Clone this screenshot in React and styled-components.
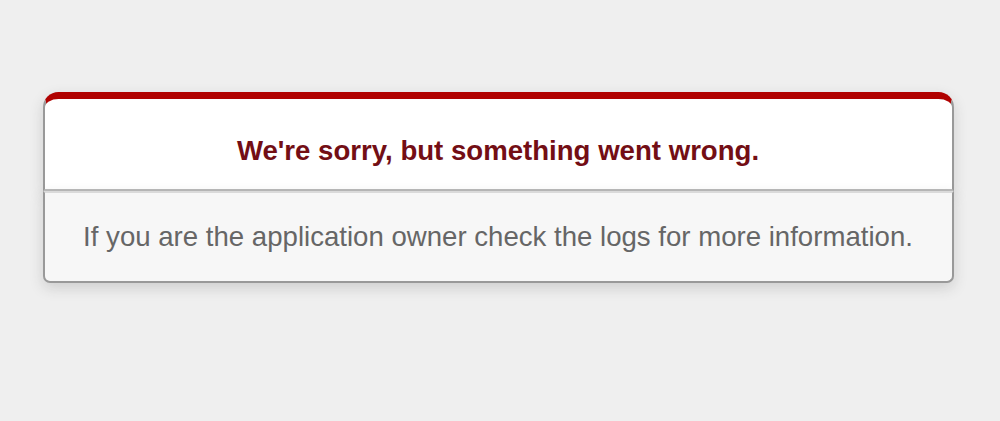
import React from "react";
import styled, { createGlobalStyle } from "styled-components";

const GlobalStyle = createGlobalStyle`
  html, body {
    margin: 0;
    padding: 0;
    background-color: #efefef;
  }
  body {
    color: #2e2f30;
    text-align: center;
    font-family: "Liberation Sans", Arial, sans-serif;
  }
`;

const Page = styled.main`
  min-height: 421px;
  padding-top: 92px;
  box-sizing: border-box;
`;

const Dialog = styled.div`
  width: 911px;
  margin: 0 auto;
  transform: translateX(-2px);
`;

const Header = styled.div`
  border: 2px solid #ccc;
  border-right-color: #999;
  border-left-color: #999;
  border-bottom-color: #bbb;
  border-top: 7.5px solid #b00100;
  border-top-left-radius: 15.5px;
  border-top-right-radius: 15.5px;
  background-color: #fff;
  padding: 12px 12% 0;
  box-shadow: 0 5px 14px rgba(50, 50, 50, 0.17);
`;

const Title = styled.h1`
  font-size: 27.6px;
  color: #730e15;
  line-height: 41.4px;
  margin: 18.5px 0 18.5px;
  font-weight: bold;
`;

const Message = styled.p`
  margin: 0 0 27.6px;
  padding: 27.6px;
  font-size: 27.6px;
  background-color: #f7f7f7;
  border: 2px solid #ccc;
  border-right-color: #999;
  border-left-color: #999;
  border-bottom-color: #999;
  border-top-color: #dadada;
  border-bottom-left-radius: 7px;
  border-bottom-right-radius: 7px;
  color: #666;
  box-shadow: 0 5px 14px rgba(50, 50, 50, 0.17);
`;

export default function App() {
  return (
    <>
      <GlobalStyle />
      <Page>
        <Dialog>
          <Header>
            <Title>We're sorry, but something went wrong.</Title>
          </Header>
          <Message>
            If you are the application owner check the logs for more information.
          </Message>
        </Dialog>
      </Page>
    </>
  );
}
